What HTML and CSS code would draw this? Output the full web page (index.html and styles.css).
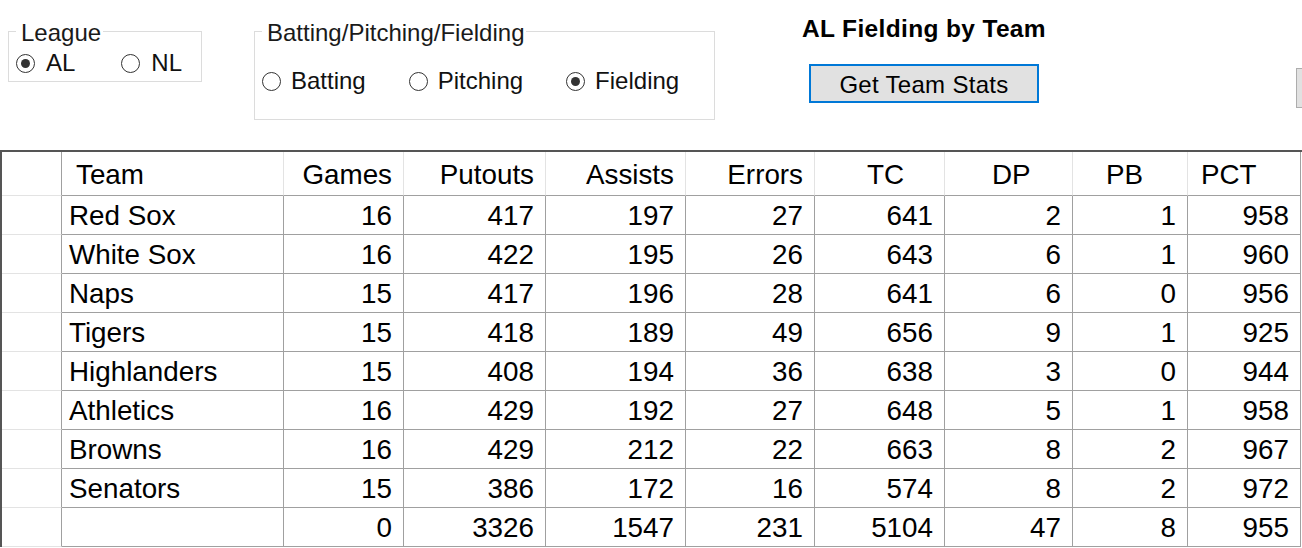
FILE: index.html
```html
<!DOCTYPE html>
<html lang="en">
<head>
<meta charset="utf-8">
<title>AL Fielding by Team</title>
<link rel="stylesheet" href="styles.css">
</head>
<body>
<div class="app">
  <div class="toolbar">
    <fieldset class="group league">
      <legend>League</legend>
      <div class="radios">
        <label class="radio"><input type="radio" name="league" checked><span>AL</span></label>
        <label class="radio"><input type="radio" name="league"><span>NL</span></label>
      </div>
    </fieldset>
    <fieldset class="group kind">
      <legend>Batting/Pitching/Fielding</legend>
      <div class="radios">
        <label class="radio"><input type="radio" name="kind"><span>Batting</span></label>
        <label class="radio"><input type="radio" name="kind"><span>Pitching</span></label>
        <label class="radio"><input type="radio" name="kind" checked><span>Fielding</span></label>
      </div>
    </fieldset>
    <div class="action">
      <h1 class="title">AL Fielding by Team</h1>
      <button class="btn primary" type="button">Get Team Stats</button>
    </div>
    <button class="btn cut" type="button" aria-label="More"></button>
  </div>

  <div class="grid">
    <div class="cell corner"></div>
    <div class="cell hd h-team">Team</div>
    <div class="cell hd num">Games</div>
    <div class="cell hd num">Putouts</div>
    <div class="cell hd num">Assists</div>
    <div class="cell hd num">Errors</div>
    <div class="cell hd h-tc">TC</div>
    <div class="cell hd h-dp">DP</div>
    <div class="cell hd h-pb">PB</div>
    <div class="cell hd h-pct last">PCT</div>

    <div class="cell rh"></div><div class="cell team">Red Sox</div><div class="cell num">16</div><div class="cell num">417</div><div class="cell num">197</div><div class="cell num">27</div><div class="cell num">641</div><div class="cell num">2</div><div class="cell num">1</div><div class="cell num">958</div>
    <div class="cell rh"></div><div class="cell team">White Sox</div><div class="cell num">16</div><div class="cell num">422</div><div class="cell num">195</div><div class="cell num">26</div><div class="cell num">643</div><div class="cell num">6</div><div class="cell num">1</div><div class="cell num">960</div>
    <div class="cell rh"></div><div class="cell team">Naps</div><div class="cell num">15</div><div class="cell num">417</div><div class="cell num">196</div><div class="cell num">28</div><div class="cell num">641</div><div class="cell num">6</div><div class="cell num">0</div><div class="cell num">956</div>
    <div class="cell rh"></div><div class="cell team">Tigers</div><div class="cell num">15</div><div class="cell num">418</div><div class="cell num">189</div><div class="cell num">49</div><div class="cell num">656</div><div class="cell num">9</div><div class="cell num">1</div><div class="cell num">925</div>
    <div class="cell rh"></div><div class="cell team">Highlanders</div><div class="cell num">15</div><div class="cell num">408</div><div class="cell num">194</div><div class="cell num">36</div><div class="cell num">638</div><div class="cell num">3</div><div class="cell num">0</div><div class="cell num">944</div>
    <div class="cell rh"></div><div class="cell team">Athletics</div><div class="cell num">16</div><div class="cell num">429</div><div class="cell num">192</div><div class="cell num">27</div><div class="cell num">648</div><div class="cell num">5</div><div class="cell num">1</div><div class="cell num">958</div>
    <div class="cell rh"></div><div class="cell team">Browns</div><div class="cell num">16</div><div class="cell num">429</div><div class="cell num">212</div><div class="cell num">22</div><div class="cell num">663</div><div class="cell num">8</div><div class="cell num">2</div><div class="cell num">967</div>
    <div class="cell rh"></div><div class="cell team">Senators</div><div class="cell num">15</div><div class="cell num">386</div><div class="cell num">172</div><div class="cell num">16</div><div class="cell num">574</div><div class="cell num">8</div><div class="cell num">2</div><div class="cell num">972</div>
    <div class="cell rh"></div><div class="cell team"></div><div class="cell num">0</div><div class="cell num">3326</div><div class="cell num">1547</div><div class="cell num">231</div><div class="cell num">5104</div><div class="cell num">47</div><div class="cell num">8</div><div class="cell num">955</div>
  </div>
</div>
</body>
</html>
```

FILE: styles.css
```css
html, body {
  margin: 0;
  padding: 0;
  background: #ffffff;
  overflow: hidden;
}

body {
  width: 1302px;
  height: 548px;
  font-family: "Liberation Sans", Arial, sans-serif;
  color: #000;
}

.app {
  width: 1302px;
}

/* ---------- top controls ---------- */
.toolbar {
  display: flex;
  align-items: flex-start;
  height: 150px;
}

.group {
  box-sizing: border-box;
  margin: 15px 0 0 0;
  border: 1px solid #dcdcdc;
  min-inline-size: 0;
  font-size: 24px;
}

.group legend {
  font-size: 24px;
  line-height: 28px;
  padding: 4px 2px 0 5px;
  color: #1a1a1a;
}

.league {
  width: 194px;
  margin-left: 8px;
  padding: 4px 0 6px 7px;
}

.kind {
  width: 461px;
  margin-left: 52px;
  padding: 22px 0 26px 7px;
}

.radios {
  display: flex;
  align-items: center;
  height: 24px;
}

.league .radios { gap: 46px; }
.kind .radios { gap: 43px; }

.radio {
  display: flex;
  align-items: center;
  gap: 10px;
  font-size: 24px;
  line-height: 24px;
  color: #111;
}

.league .radio { gap: 11px; }

.radio input {
  appearance: none;
  -webkit-appearance: none;
  box-sizing: border-box;
  width: 19px;
  height: 19px;
  margin: 0;
  border: 1.5px solid #333;
  border-radius: 50%;
  background: #fff;
  display: grid;
  place-content: center;
}

.radio input:checked::before {
  content: "";
  display: block;
  width: 9px;
  height: 9px;
  border-radius: 50%;
  background: #333;
}

.action {
  display: flex;
  flex-direction: column;
  align-items: flex-start;
  margin: 14px 0 0 87px;
  width: 244px;
  flex-shrink: 0;
}

.title {
  margin: 0;
  font-size: 24.5px;
  line-height: 29px;
  font-weight: bold;
  letter-spacing: 0.35px;
  white-space: nowrap;
}

.btn {
  font-family: "Liberation Sans", Arial, sans-serif;
  font-size: 24px;
  color: #000;
  background: #e1e1e1;
  box-sizing: border-box;
  padding: 0;
}

.primary {
  margin: 21px 0 0 7px;
  width: 230px;
  height: 39px;
  border: 2px solid #0078d7;
  padding-top: 3px;
  letter-spacing: 0.3px;
}

.cut {
  flex-shrink: 0;
  margin: 68px 0 0 auto;
  width: 6px;
  height: 40px;
  border: 1px solid #adadad;
  border-right: 0;
}

/* ---------- data grid ---------- */
.grid {
  display: grid;
  grid-template-columns: 60px 222px 120px 142px 140px 129px 130px 128px 115px 113px;
  grid-template-rows: 44px repeat(9, 39px);
  border-top: 2px solid #555;
  border-left: 2px solid #555;
}

.cell {
  box-sizing: border-box;
  display: flex;
  align-items: center;
  padding-top: 2px;
  border-right: 1px solid #a0a0a0;
  border-bottom: 1px solid #a0a0a0;
  font-size: 27.8px;
  line-height: 32px;
  white-space: nowrap;
  overflow: hidden;
}

.hd {
  border-right-color: #e3e3e3;
}

.hd.last {
  border-right-color: #a0a0a0;
}

.corner {
  border-bottom-color: #e3e3e3;
}

.rh {
  border-bottom-color: #e3e3e3;
}

.num {
  justify-content: flex-end;
  padding-right: 11px;
}

.team {
  padding-left: 7px;
}

.h-team { padding-left: 14px; }
.h-tc { padding-left: 52px; }
.h-dp { padding-left: 47px; }
.h-pb { padding-left: 33px; }
.h-pct { padding-left: 13px; }
```
